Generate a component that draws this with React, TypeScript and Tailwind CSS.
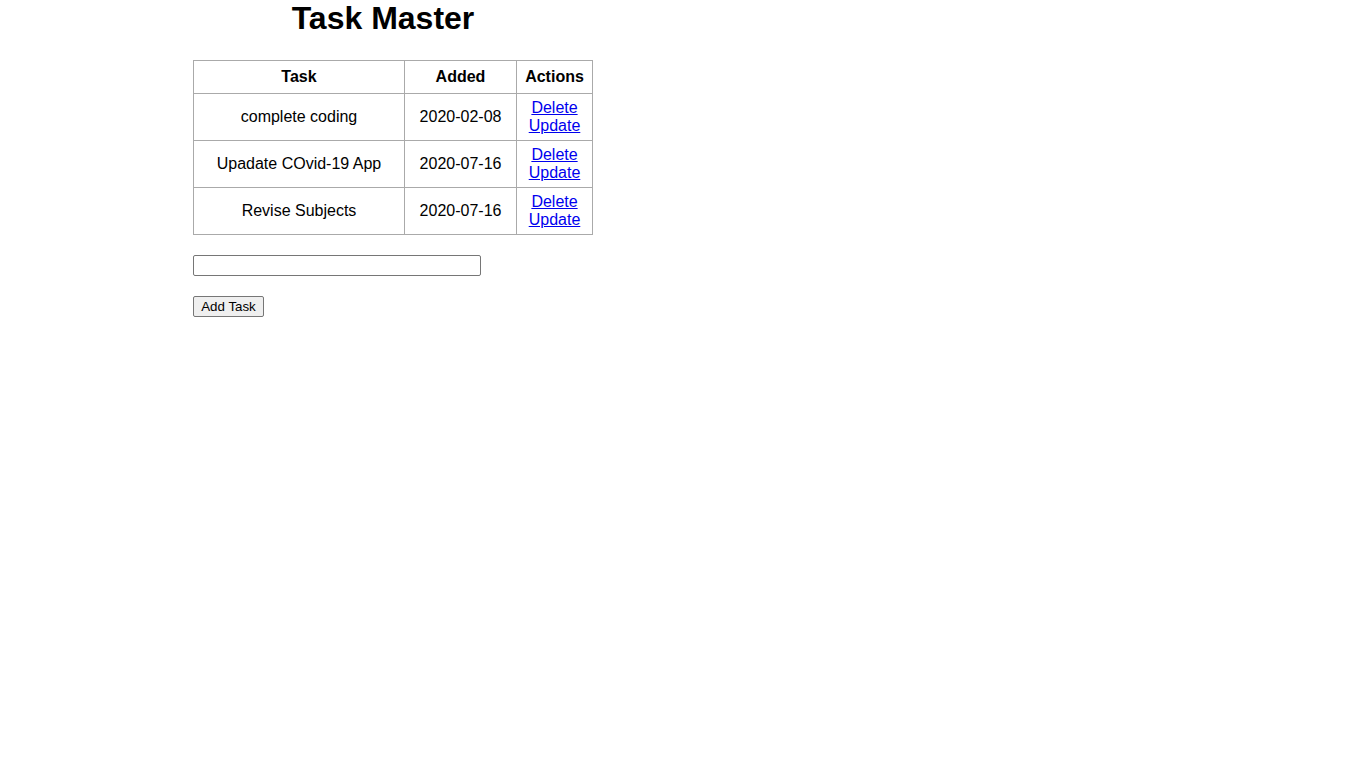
import React from "react";

const rows = [
  { task: "complete coding", added: "2020-02-08" },
  { task: "Upadate COvid-19 App", added: "2020-07-16" },
  { task: "Revise Subjects", added: "2020-07-16" },
];

export default function App() {
  return (
    <div className="min-h-screen bg-white text-black" style={{ fontFamily: '"Liberation Sans", Arial, sans-serif' }}>
      <div className="ml-[193px] w-[400px]">
        <h1 className="w-[380px] text-center text-[32px] font-bold leading-[37px] mb-[23px]">Task Master</h1>
        <table className="w-[400px] border-collapse text-[16px] leading-[18px]">
          <thead>
            <tr className="h-[33px]">
              <th className="w-[211px] border border-[#aaa] font-bold">Task</th>
              <th className="w-[112px] border border-[#aaa] font-bold">Added</th>
              <th className="border border-[#aaa] font-bold">Actions</th>
            </tr>
          </thead>
          <tbody>
            {rows.map((r, i) => (
              <tr key={i}>
                <td className="border border-[#aaa] p-[5px] text-center">{r.task}</td>
                <td className="border border-[#aaa] p-[5px] text-center">{r.added}</td>
                <td className="border border-[#aaa] p-[5px] text-center">
                  <a href="#" className="text-[#0000ee] underline">Delete</a>
                  <br />
                  <a href="#" className="text-[#0000ee] underline">Update</a>
                </td>
              </tr>
            ))}
          </tbody>
        </table>
        <div className="mt-[20px] flex flex-col items-start">
          <input type="text" className="h-[21px] w-[288px] rounded-[2px] border border-[#767676] bg-white px-[2px] text-[13px]" />
          <button className="mt-[20px] h-[21px] w-[71px] rounded-[2px] border border-[#767676] bg-[#efefef] text-[13.33px] leading-[15px] text-black">Add Task</button>
        </div>
      </div>
    </div>
  );
}
